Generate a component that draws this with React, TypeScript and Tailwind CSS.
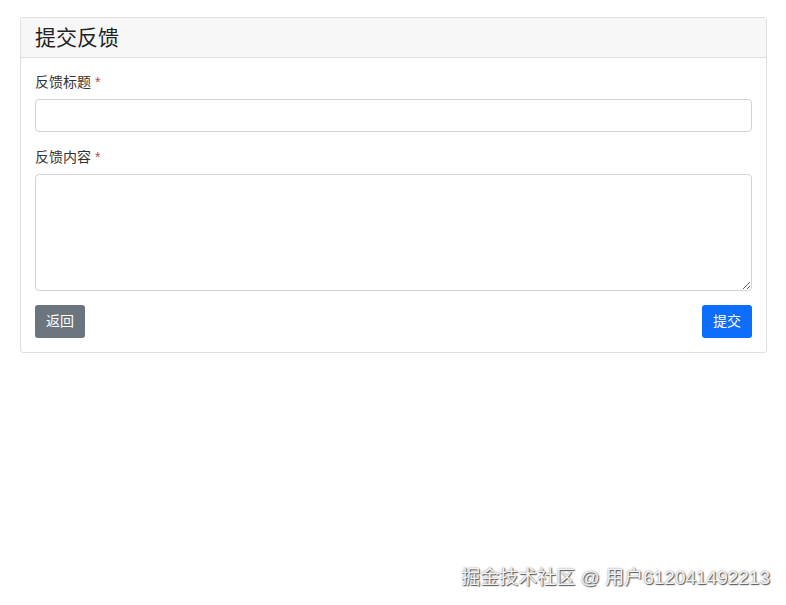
import { useState } from "react";

// Feedback form — a single card with title, two required fields and actions.
export default function App() {
  const [title, setTitle] = useState("");
  const [content, setContent] = useState("");

  return (
    <div className="relative min-h-[605px] bg-white font-['Liberation_Sans','Noto_Sans_CJK_SC',sans-serif] text-[#333]">
      <div className="pl-[20px] pr-[19px] pt-[17px]">
        <div className="rounded-[3px] border border-[#dfdfdf]">
          <div className="flex h-[40px] items-center border-b border-[#dfdfdf] bg-[#f7f7f7] px-[14px]">
            <h1 className="text-[21px] leading-none text-[#222]">提交反馈</h1>
          </div>

          <form
            onSubmit={(e) => e.preventDefault()}
            className="px-[14px] pb-[14px] pt-[14px]"
          >
            <Field label="反馈标题">
              <input
                value={title}
                onChange={(e) => setTitle(e.target.value)}
                className="block h-[33px] w-full rounded-[4px] border border-[#cfd4da] px-2 text-[14px] outline-none"
              />
            </Field>

            <div className="h-[15px]" />

            <Field label="反馈内容">
              <textarea
                value={content}
                onChange={(e) => setContent(e.target.value)}
                className="block h-[117px] w-full rounded-[4px] border border-[#cfd4da] px-2 py-1 text-[14px] outline-none"
              />
            </Field>

            <div className="mt-[14px] flex items-center justify-between">
              <button
                type="button"
                className="h-[33px] rounded-[3px] bg-[#6c757d] px-[11px] text-[14px] text-white"
              >
                返回
              </button>
              <button
                type="submit"
                className="h-[33px] rounded-[3px] bg-[#0d6efd] px-[11px] text-[14px] text-white"
              >
                提交
              </button>
            </div>
          </form>
        </div>
      </div>

      {/* platform watermark laid over the page corner */}
      <div className="absolute bottom-[15px] right-[16px] text-[19px] leading-[24px] text-[#f2f2f2] [text-shadow:1px_1px_1px_#555,0_0_2px_#888]">
        掘金技术社区 @ 用户612041492213
      </div>
    </div>
  );
}

function Field({
  label,
  children,
}: {
  label: string;
  children: React.ReactNode;
}) {
  return (
    <label className="block">
      <span className="mb-[6px] block h-[21px] text-[14px] leading-[21px]">
        {label} <span className="text-[#b94a55]">*</span>
      </span>
      {children}
    </label>
  );
}
